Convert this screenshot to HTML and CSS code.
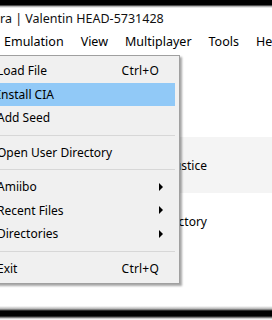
FILE: index.html
```html
<!DOCTYPE html>
<html lang="en">
<head>
  <meta charset="UTF-8" />
  <title>Citra</title>
  <link rel="stylesheet" href="styles.css">
</head>
<body>
  <div class="screen">
    <div class="edge edge-top"></div>
    <div class="titlebar">ra | Valentin HEAD-5731428</div>
    <div class="menubar">
      <span class="menubar-item">Emulation</span>
      <span class="menubar-item">View</span>
      <span class="menubar-item">Multiplayer</span>
      <span class="menubar-item">Tools</span>
      <span class="menubar-item">He</span>
    </div>

    <div class="content">
      <div class="list-row alt"><span class="cell">Justice</span></div>
      <div class="list-row"><span class="cell">Directory</span></div>
    </div>

    <div class="edge edge-bottom"></div>

    <!-- File menu popup -->
    <div class="popup">
      <div class="item"><span class="label">Load File</span><span class="shortcut">Ctrl+O</span></div>
      <div class="item active"><span class="label">Install CIA</span></div>
      <div class="item"><span class="label">Add Seed</span></div>
      <div class="sep"></div>
      <div class="item"><span class="label">Open User Directory</span></div>
      <div class="sep"></div>
      <div class="item"><span class="label">Amiibo</span><span class="arrow"></span></div>
      <div class="item"><span class="label">Recent Files</span><span class="arrow"></span></div>
      <div class="item"><span class="label">Directories</span><span class="arrow"></span></div>
      <div class="sep"></div>
      <div class="item"><span class="label">Exit</span><span class="shortcut">Ctrl+Q</span></div>
    </div>
  </div>
</body>
</html>
```

FILE: styles.css
```css
* { box-sizing: border-box; }
html, body {
  overflow: hidden;
}
body {
  margin: 0;
  background: #fff;
  font-family: 'Noto Sans', 'Open Sans', sans-serif;
  font-size: 12px;
  color: #000;
}
.screen {
  width: 272px;
  height: 320px;
  overflow: hidden;
  position: relative;
  display: flex;
  flex-direction: column;
}
.edge {
  flex: none;
}
.edge-top {
  height: 8px;
  background: linear-gradient(#000 0, #000 5px, #9a9a9a 6px, #fff 8px);
}
.edge-bottom {
  height: 14px;
  background: linear-gradient(#fff 0, #b0b0b0 3px, #000 5px, #000 10px, #555 11px, #f2f2f2 13px);
}
.titlebar {
  height: 23px;
  line-height: 22px;
  font-size: 12.5px;
  color: #111;
  white-space: nowrap;
}
.menubar {
  height: 21px;
  display: flex;
  align-items: center;
  padding-left: 4px;
  gap: 17px;
  white-space: nowrap;
  font-size: 12.5px;
  overflow: hidden;
}
.content {
  flex: 1;
  display: flex;
  flex-direction: column;
  padding-top: 85px;
}
.list-row {
  height: 56px;
  display: flex;
  align-items: center;
}
.list-row.alt {
  background: #f4f4f4;
}
.cell {
  width: 207px;
  text-align: right;
  white-space: nowrap;
  font-size: 12px;
}

/* popup menu */
.popup {
  position: absolute;
  left: -30px;
  top: 55px;
  width: 210px;
  padding: 3px 4px 3px 2px;
  background: #f0f0f0;
  border: 1px solid #a0a0a0;
  box-shadow: 2px 2px 2px rgba(0, 0, 0, 0.35);
  font-size: 12px;
}
.item {
  height: 23.5px;
  display: flex;
  align-items: center;
  padding: 0 16px 0 24px;
  white-space: nowrap;
}
.item.active {
  background: #91c9f7;
}
.label {
  flex: 1;
}
.shortcut {
  letter-spacing: 0.2px;
}
.arrow {
  width: 0;
  height: 0;
  margin-right: -4px;
  border-top: 4px solid transparent;
  border-bottom: 4px solid transparent;
  border-left: 4px solid #000;
}
.sep {
  height: 11px;
  display: flex;
  align-items: center;
}
.sep::after {
  content: "";
  display: block;
  width: 100%;
  height: 1px;
  background: #d7d7d7;
}
```
